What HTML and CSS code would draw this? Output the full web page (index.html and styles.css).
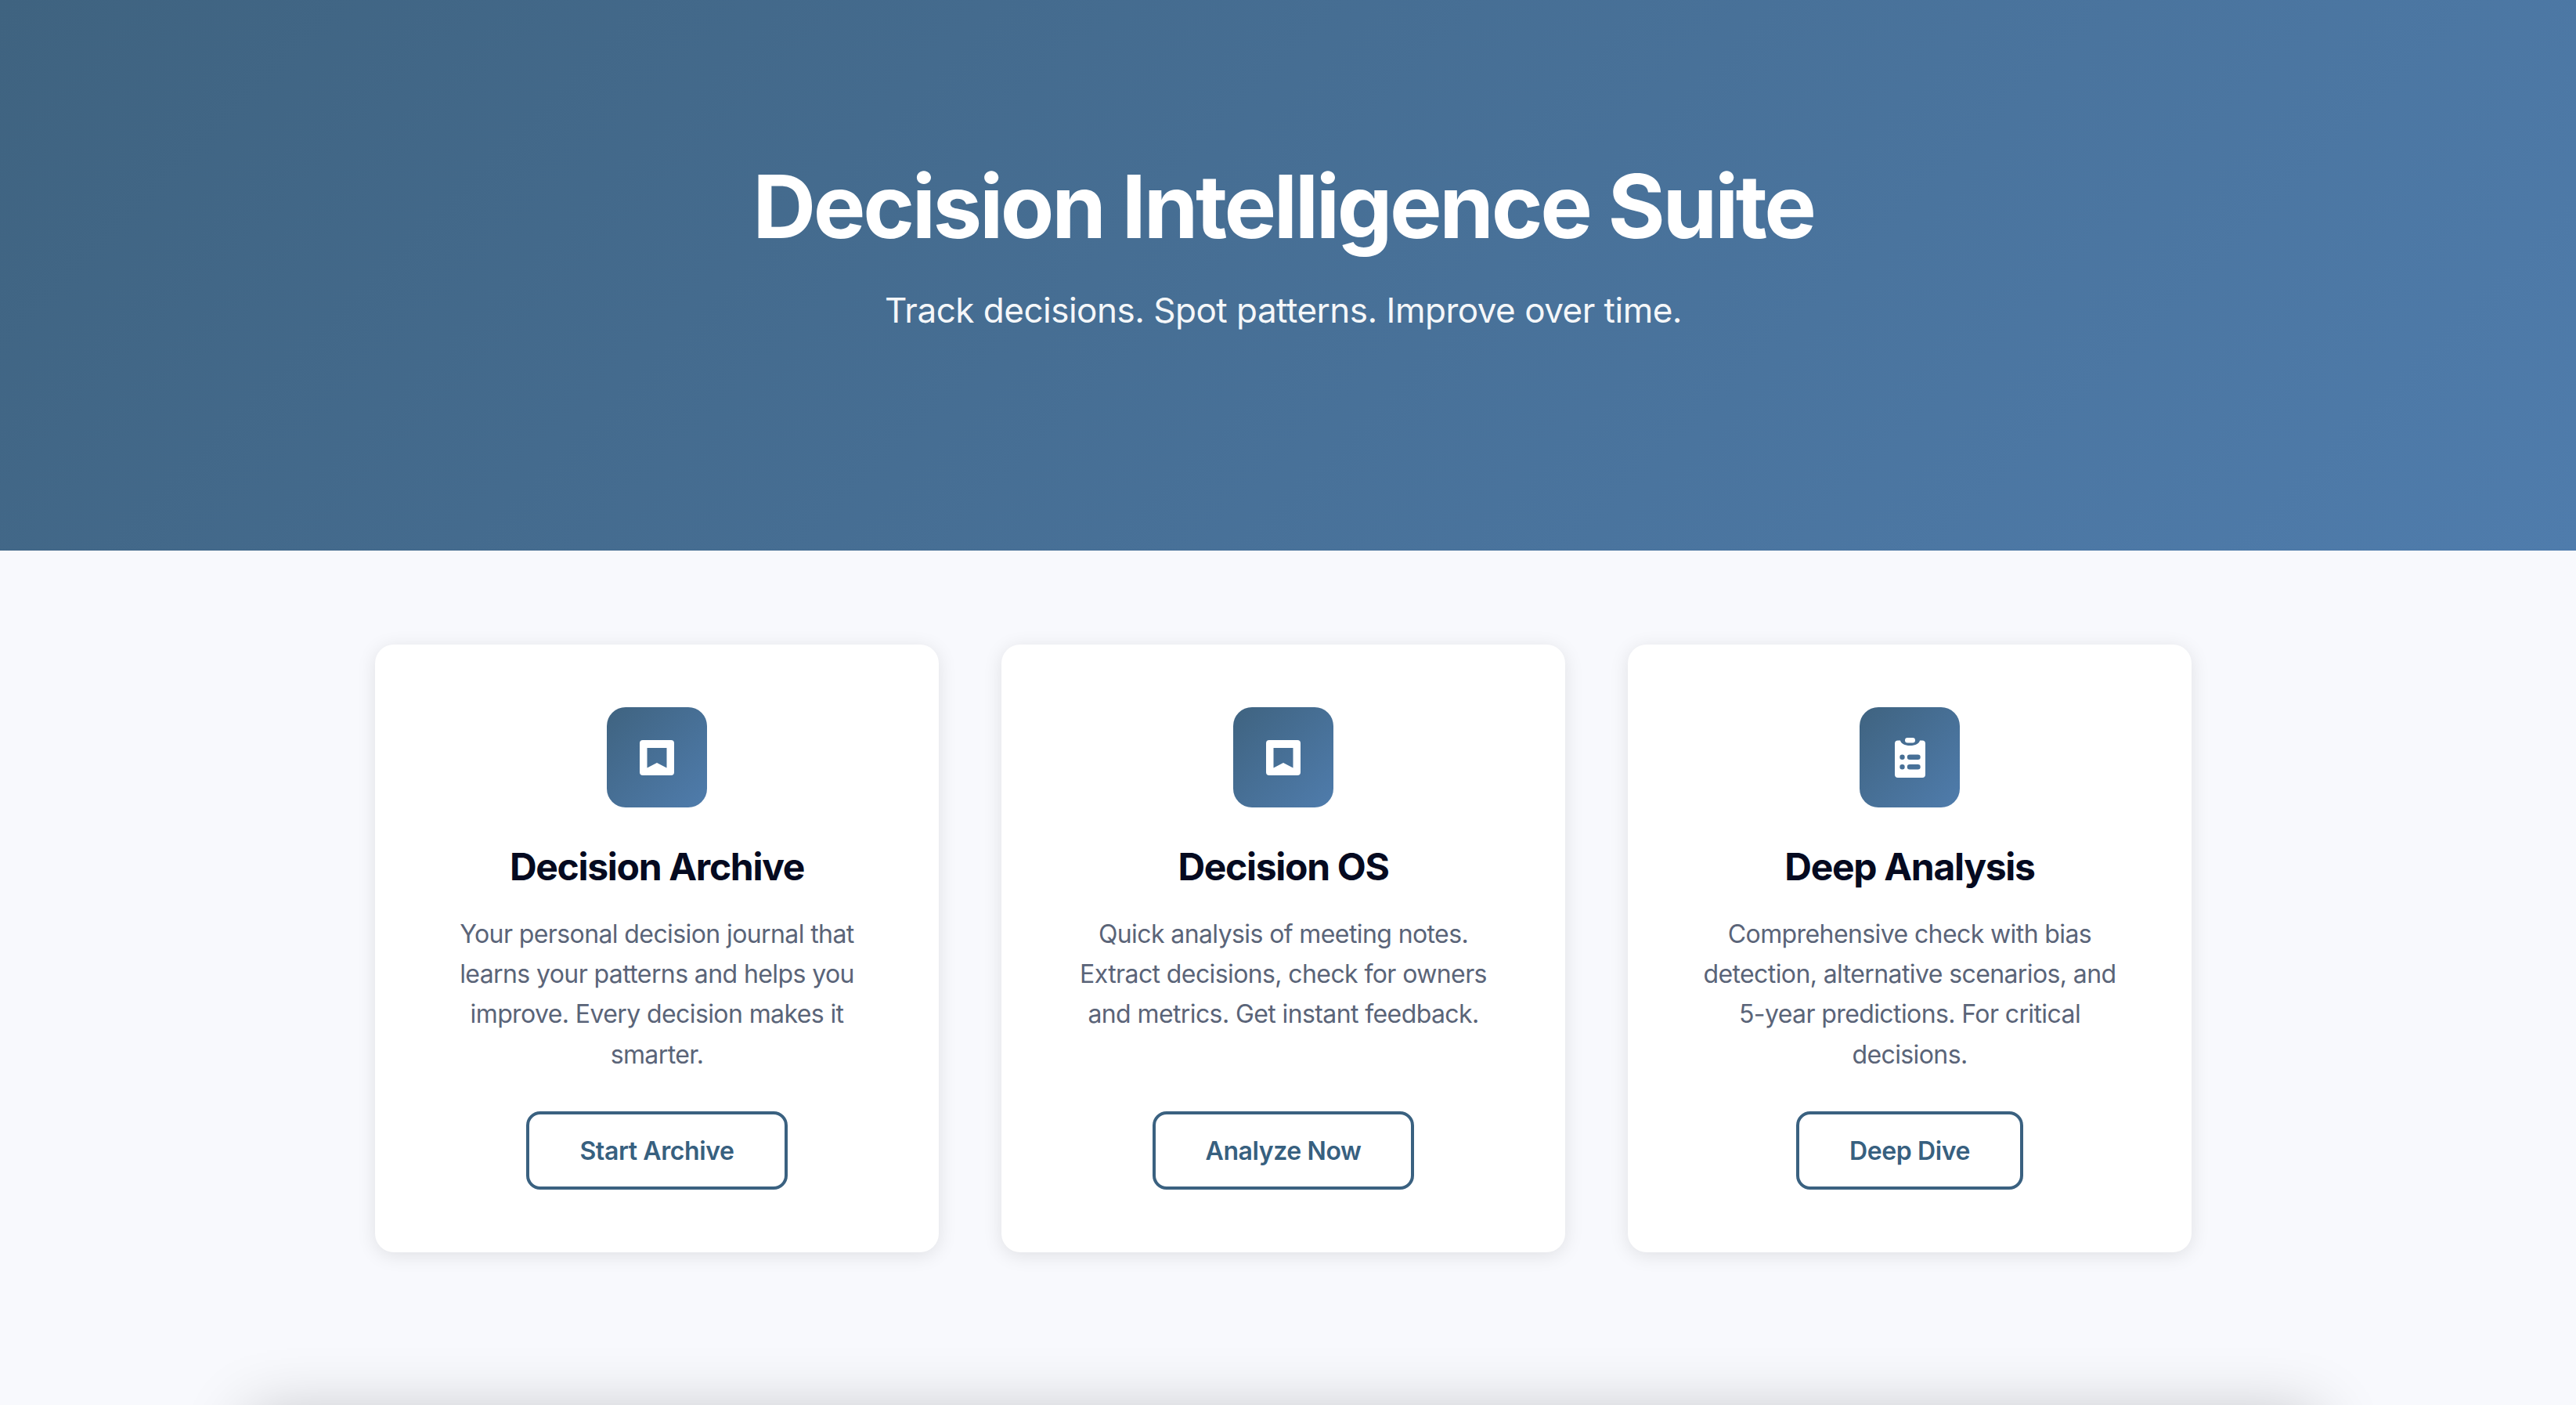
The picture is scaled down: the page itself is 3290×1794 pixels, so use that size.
FILE: index.html
```html
<!DOCTYPE html>
<html lang="en">
<head>
  <meta charset="UTF-8" />
  <title>Decision Intelligence Suite</title>
  <link rel="stylesheet" href="styles.css">
</head>
<body>

  <header class="hero">
    <h1>Decision Intelligence Suite</h1>
    <p>Track decisions. Spot patterns. Improve over time.</p>
  </header>

  <main class="cards">
    <div class="card">
      <div class="card-icon">
        <svg viewBox="0 0 44 45" width="44" height="45"><path fill="#fff" fill-rule="evenodd" d="M4 0h36a4 4 0 0 1 4 4v37a4 4 0 0 1-4 4H4a4 4 0 0 1-4-4V4a4 4 0 0 1 4-4zM9.500 10v25.500L22 29l12.500 6.500V10z"/></svg>
      </div>
      <h2>Decision Archive</h2>
      <p>Your personal decision journal that learns your patterns and helps you improve. Every decision makes it smarter.</p>
      <button class="card-btn">Start Archive</button>
    </div>

    <div class="card">
      <div class="card-icon">
        <svg viewBox="0 0 44 45" width="44" height="45"><path fill="#fff" fill-rule="evenodd" d="M4 0h36a4 4 0 0 1 4 4v37a4 4 0 0 1-4 4H4a4 4 0 0 1-4-4V4a4 4 0 0 1 4-4zM9.500 10v25.500L22 29l12.500 6.500V10z"/></svg>
      </div>
      <h2>Decision OS</h2>
      <p>Quick analysis of meeting notes. Extract decisions, check for owners and metrics. Get instant feedback.</p>
      <button class="card-btn">Analyze Now</button>
    </div>

    <div class="card">
      <div class="card-icon">
        <svg viewBox="0 0 39 51" width="39" height="51"><path fill="#fff" fill-rule="evenodd" d="M4 3.500h3c1 4 5.500 6.500 12.500 6.500S31 7.500 32 3.500h3a4 4 0 0 1 4 4V47a4 4 0 0 1-4 4H4a4 4 0 0 1-4-4V7.500a4 4 0 0 1 4-4zM9.500 21.500a3.200 3.200 0 1 0 0 6.400 3.200 3.200 0 0 0 0-6.400zM9.500 34a3.200 3.200 0 1 0 0 6.400 3.200 3.200 0 0 0 0-6.400zM19 21.500a3.200 3.200 0 0 0 0 6.400h10.500a3.200 3.200 0 0 0 0-6.400zM19 34a3.200 3.200 0 0 0 0 6.400h10.500a3.200 3.200 0 0 0 0-6.400z"/><rect x="13" y="0" width="13" height="6.500" rx="3.250" fill="#fff"/></svg>
      </div>
      <h2>Deep Analysis</h2>
      <p>Comprehensive check with bias detection, alternative scenarios, and 5-year predictions. For critical decisions.</p>
      <button class="card-btn">Deep Dive</button>
    </div>
  </main>

  <section class="details"></section>

</body>
</html>
```

FILE: styles.css
```css
* {
  box-sizing: border-box;
}

body {
  font-family: Inter, "Liberation Sans", sans-serif;
  background-color: #f8f9fd;
  margin: 0;
  overflow-x: hidden;
}

.hero {
  height: 703px;
  padding: 190px 12px 0 0;
  background: linear-gradient(135deg, #3f6380 0%, #4f7cac 100%);
  color: #fff;
  text-align: center;
}

.hero h1 {
  margin: 0;
  font-size: 112px;
  line-height: 146px;
  font-weight: 700;
  letter-spacing: -3.400px;
}

.hero p {
  margin: 30px 0 0;
  font-size: 44px;
  line-height: 60px;
  letter-spacing: -0.500px;
  opacity: 0.95;
}

.cards {
  display: grid;
  grid-template-columns: repeat(3, 720px);
  gap: 80px;
  justify-content: center;
  padding: 120px 12px 0 0;
}

.card {
  display: flex;
  flex-direction: column;
  align-items: center;
  height: 776px;
  padding: 80px 76px;
  background: #fff;
  border-radius: 24px;
  box-shadow: 0 4px 24px rgba(0, 0, 0, 0.1);
  text-align: center;
}

.card-icon {
  display: flex;
  align-items: center;
  justify-content: center;
  width: 128px;
  height: 128px;
  border-radius: 24px;
  background: linear-gradient(135deg, #3f6380 0%, #4f7cac 100%);
}

.card h2 {
  margin: 44px 0 0;
  font-size: 48px;
  line-height: 64px;
  font-weight: 700;
  letter-spacing: -1.300px;
  color: #050a20;
}

.card p {
  margin: 28px 0 0;
  height: 205px;
  font-size: 32px;
  line-height: 51.200px;
  letter-spacing: -0.600px;
  color: #5a6478;
}

.card-btn {
  margin-top: 47px;
  height: 100px;
  padding: 0 64px;
  font-family: inherit;
  font-size: 32px;
  font-weight: 600;
  letter-spacing: -0.400px;
  color: #37607f;
  background: #fff;
  border: 4px solid #3a6180;
  border-radius: 18px;
}

.details {
  width: 2640px;
  height: 600px;
  margin: 201px 0 0 319px;
  background: #fff;
  box-shadow: 0 8px 80px rgba(0, 0, 0, 0.24);
}
```
